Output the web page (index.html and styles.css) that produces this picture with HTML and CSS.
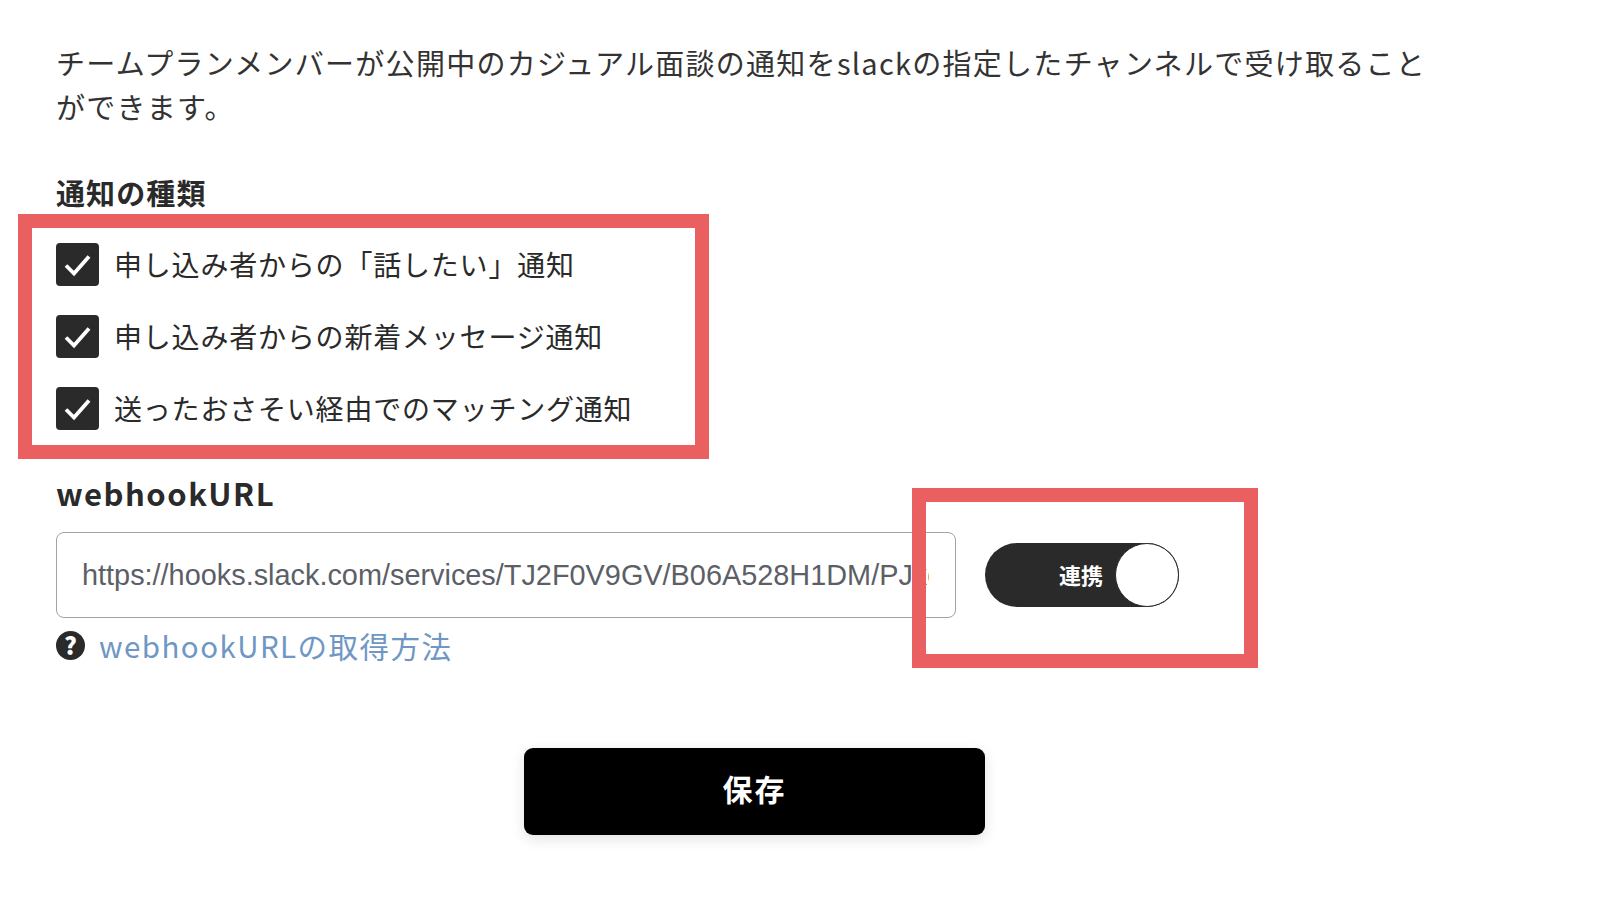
FILE: index.html
```html
<!DOCTYPE html>
<html lang="ja">
<head>
<meta charset="utf-8">
<title>Slack通知設定</title>
<link rel="stylesheet" href="styles.css">
</head>
<body>
<main class="page">
  <p class="lead">チームプランメンバーが公開中のカジュアル面談の通知をslackの指定したチャンネルで受け取ることができます。</p>
  <h2 class="heading">通知の種類</h2>
  <ul class="checks">
    <li class="check"><span class="box"><svg viewBox="0 0 43 43" class="tick"><path d="M10 22.5l8 8L33 13.5"/></svg></span>申し込み者からの「話したい」通知</li>
    <li class="check"><span class="box"><svg viewBox="0 0 43 43" class="tick"><path d="M10 22.5l8 8L33 13.5"/></svg></span>申し込み者からの新着メッセージ通知</li>
    <li class="check"><span class="box"><svg viewBox="0 0 43 43" class="tick"><path d="M10 22.5l8 8L33 13.5"/></svg></span>送ったおさそい経由でのマッチング通知</li>
  </ul>
  <h2 class="heading url-heading">webhookURL</h2>
  <div class="url-row">
    <div class="field"><span class="field-text">https://hooks.slack.com/services/TJ2F0V9GV/B06A528H1DM/PJxc7mZr3</span></div>
    <div class="toggle"><span class="toggle-label">連携</span><span class="knob"></span></div>
  </div>
  <a class="help" href="#"><span class="help-icon">?</span>webhookURLの取得方法</a>
  <div class="actions"><button class="save">保存</button></div>
</main>
<div class="mark mark-checks"></div>
<div class="mark mark-toggle"></div>
</body>
</html>
```
FILE: styles.css
```css
* { box-sizing: border-box; }
html, body { margin: 0; height: 100%; background: #fff; overflow: hidden; }
body {
  position: relative;
  font-family: "Noto Sans CJK JP", "Noto Sans", sans-serif;
  color: #2a2a2a;
}
.page { width: 1453px; padding: 41px 0 0 56px; }
.lead {
  max-width: 1385px;
  margin: 0;
  font-size: 29px;
  line-height: 43.5px;
  letter-spacing: 1.28px;
  color: #333;
}
.heading {
  margin: 43px 0 0;
  font-size: 29px;
  line-height: 42px;
  font-weight: 700;
  letter-spacing: 1.1px;
}
.checks { list-style: none; margin: 29px 0 0; padding: 0; }
.check {
  display: flex;
  align-items: center;
  gap: 15px;
  height: 43px;
  margin-bottom: 29px;
  font-size: 28px;
  letter-spacing: 0.8px;
}
.box {
  flex: none;
  width: 43px;
  height: 43px;
  margin-top: 2px;
  border-radius: 4px;
  background: #2a2a2a;
}
.tick { display: block; width: 43px; height: 43px; fill: none; stroke: #fff; stroke-width: 3.8; }
.url-heading { margin-top: 42.4px; font-size: 31px; line-height: 44px; letter-spacing: 1.5px; }
.url-row { display: flex; align-items: center; gap: 29px; margin-top: 17px; }
.field {
  width: 900px;
  height: 86px;
  padding: 0 26px 0 25px;
  display: flex;
  align-items: center;
  border: 1px solid #a3a3a3;
  border-radius: 8px;
}
.field-text {
  display: block;
  width: 100%;
  overflow: hidden;
  white-space: nowrap;
  font-family: "Liberation Sans", Arial, sans-serif;
  font-size: 28.87px;
  color: #5c5f66;
}
.toggle {
  width: 194px;
  height: 64px;
  border-radius: 32px;
  background: #2a2a2a;
  display: flex;
  align-items: center;
  justify-content: flex-end;
}
.toggle-label { color: #fff; font-size: 22px; font-weight: 700; margin-right: 12px; padding-bottom: 3px; }
.knob {
  width: 64px;
  height: 64px;
  border-radius: 50%;
  background: #fff;
  border: 1px solid #2a2a2a;
}
.help {
  display: flex;
  align-items: center;
  gap: 14px;
  margin-top: 6px;
  height: 42px;
  font-size: 29.5px;
  letter-spacing: 1.45px;
  color: #6f97c3;
  text-decoration: none;
}
.help-icon {
  width: 29px;
  height: 29px;
  border-radius: 50%;
  background: #2a2a2a;
  color: #fff;
  font-size: 24px;
  font-weight: 900;
  letter-spacing: 0;
  line-height: 28px;
  text-align: center;
}
.actions { display: flex; justify-content: center; margin-top: 81.6px; }
.save {
  width: 461px;
  height: 87px;
  padding: 0 0 6px;
  border: 0;
  border-radius: 9px;
  background: #000;
  color: #fff;
  font-family: inherit;
  font-size: 30px;
  font-weight: 700;
  letter-spacing: 2px;
  box-shadow: 0 4px 14px rgba(0, 0, 0, 0.12);
}
.mark { position: absolute; border: 14.5px solid #ea5f5f; }
.mark-checks { left: 17.5px; top: 213.5px; width: 691px; height: 245.5px; }
.mark-toggle { left: 912px; top: 488px; width: 346px; height: 180px; }
```
